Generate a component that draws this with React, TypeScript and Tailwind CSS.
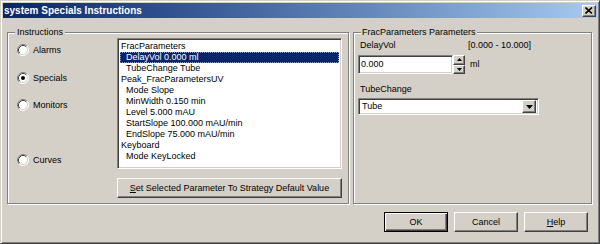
import React from "react";

const listItems = [
  { text: "FracParameters", indent: false },
  { text: "DelayVol 0.000 ml", indent: true, selected: true },
  { text: "TubeChange Tube", indent: true },
  { text: "Peak_FracParametersUV", indent: false },
  { text: "Mode Slope", indent: true },
  { text: "MinWidth 0.150 min", indent: true },
  { text: "Level 5.000 mAU", indent: true },
  { text: "StartSlope 100.000 mAU/min", indent: true },
  { text: "EndSlope 75.000 mAU/min", indent: true },
  { text: "Keyboard", indent: false },
  { text: "Mode KeyLocked", indent: true },
];

const raised =
  "bg-[#d4d0c8] border border-t-white border-l-white border-r-[#404040] border-b-[#404040] shadow-[inset_-1px_-1px_0_#808080]";
const sunken =
  "bg-white border border-t-[#808080] border-l-[#808080] border-r-white border-b-white shadow-[inset_1px_1px_0_#404040,inset_-1px_-1px_0_#d4d0c8]";
const etched =
  "border border-[#808080] shadow-[1px_1px_0_#fff,inset_1px_1px_0_#fff]";

function Radio({ checked }: { checked?: boolean }) {
  return (
    <svg width="12" height="12" viewBox="0 0 12 12" className="shrink-0">
      <circle cx="6" cy="6" r="5" fill="#fff" />
      <path d="M2.11 9.89 A5.5 5.5 0 0 1 9.89 2.11" fill="none" stroke="#808080" strokeWidth="1" />
      <path d="M9.89 2.11 A5.5 5.5 0 0 1 2.11 9.89" fill="none" stroke="#fff" strokeWidth="1" />
      <path d="M2.82 9.18 A4.5 4.5 0 0 1 9.18 2.82" fill="none" stroke="#404040" strokeWidth="1" />
      <path d="M9.18 2.82 A4.5 4.5 0 0 1 2.82 9.18" fill="none" stroke="#d4d0c8" strokeWidth="1" />
      {checked && <circle cx="6" cy="6" r="2" fill="#000" />}
    </svg>
  );
}

function Arrow({ dir }: { dir: "up" | "down" }) {
  return (
    <svg width="5" height="3" viewBox="0 0 5 3">
      <path d={dir === "up" ? "M2.5 0 L5 3 L0 3 Z" : "M0 0 L5 0 L2.5 3 Z"} fill="#000" />
    </svg>
  );
}

export default function App() {
  return (
    <div className="w-[600px] h-[244px] overflow-hidden bg-[#d4d0c8] border border-t-[#d4d0c8] border-l-[#d4d0c8] border-r-[#404040] border-b-[#404040] shadow-[inset_1px_1px_0_#fff,inset_-1px_-1px_0_#808080] p-[2px] flex flex-col [font-family:'Liberation_Sans',Arial,sans-serif] text-[9px] leading-[11px] text-black">
      {/* Title bar */}
      <div className="h-[15px] shrink-0 flex items-center bg-gradient-to-r from-[#0a246a] to-[#a6caf0] pl-[1px] pr-[1px]">
        <span className="text-white font-bold text-[10px] leading-[15px]">system Specials Instructions</span>
        <div className={`ml-auto w-[14px] h-[12px] flex items-center justify-center ${raised}`}>
          <svg width="8" height="7" viewBox="0 0 8 7">
            <path d="M0.5 0.5 L7 6.5 M7 0.5 L0.5 6.5" stroke="#000" strokeWidth="1.6" />
          </svg>
        </div>
      </div>

      {/* Body */}
      <div className="flex-1 flex flex-col pl-[4px] pr-[5px]">
        <div className="flex gap-[4px] mt-[9px]">
          {/* Instructions group */}
          <fieldset className={`w-[342px] h-[177px] ${etched}`}>
            <legend className="ml-[7px] px-[2px] bg-[#d4d0c8] leading-[11px]">Instructions</legend>
            <div className="flex pl-[9px]">
              <div className="w-[100px] flex flex-col">
                <div className="flex items-center gap-[4px] h-[12px] mt-[6px]">
                  <Radio />
                  <span>Alarms</span>
                </div>
                <div className="flex items-center gap-[4px] h-[12px] mt-[16px]">
                  <Radio checked />
                  <span>Specials</span>
                </div>
                <div className="flex items-center gap-[4px] h-[12px] mt-[15px]">
                  <Radio />
                  <span>Monitors</span>
                </div>
                <div className="flex items-center gap-[4px] h-[12px] mt-[43px]">
                  <Radio />
                  <span>Curves</span>
                </div>
              </div>
              <div className="w-[225px] flex flex-col">
                <div className={`h-[131px] p-[2px] ${sunken}`}>
                  {listItems.map((item) => (
                    <div
                      key={item.text}
                      className={`h-[11px] leading-[11px] whitespace-nowrap ${item.indent ? "pl-[6px]" : "pl-[1px]"} ${
                        item.selected
                          ? "bg-[#0a246a] text-white outline outline-1 outline-dotted outline-[#8c9cc4] -outline-offset-1"
                          : ""
                      }`}
                    >
                      {item.text}
                    </div>
                  ))}
                </div>
                <div className={`mt-[9px] h-[20px] flex items-center justify-center ${raised}`}>
                  <span>
                    <span className="underline">S</span>et Selected Parameter To Strategy Default Value
                  </span>
                </div>
              </div>
            </div>
          </fieldset>

          {/* Parameters group */}
          <fieldset className={`w-[239px] h-[177px] ${etched}`}>
            <legend className="ml-[7px] px-[1px] bg-[#d4d0c8] leading-[11px]">FracParameters Parameters</legend>
            <div className="flex flex-col pl-[4px]">
              <div className="flex mt-[2px] h-[11px]">
                <span className="w-[110px] pl-[2px]">DelayVol</span>
                <span>[0.000 - 10.000]</span>
              </div>
              <div className="flex items-center mt-[4px]">
                <div className={`w-[95px] h-[19px] flex items-center pl-[2px] ${sunken}`}>0.000</div>
                <div className="w-[12px] h-[19px] flex flex-col">
                  <div className={`flex-1 flex items-center justify-center ${raised}`}>
                    <Arrow dir="up" />
                  </div>
                  <div className={`flex-1 flex items-center justify-center ${raised}`}>
                    <Arrow dir="down" />
                  </div>
                </div>
                <span className="ml-[5px]">ml</span>
              </div>
              <div className="mt-[10px] h-[11px] pl-[2px]">TubeChange</div>
              <div className={`mt-[3px] w-[181px] h-[17px] flex items-center p-[2px] ${sunken}`}>
                <span className="pl-[1px]">Tube</span>
                <div className={`ml-auto w-[14px] h-[13px] flex items-center justify-center ${raised}`}>
                  <svg width="7" height="4" viewBox="0 0 7 4">
                    <path d="M0 0 L7 0 L3.5 4 Z" fill="#000" />
                  </svg>
                </div>
              </div>
            </div>
          </fieldset>
        </div>

        {/* Buttons */}
        <div className="flex justify-end gap-[6px] mt-[8px] pr-[4px]">
          <div className="w-[64px] h-[20px] flex items-center justify-center bg-[#d4d0c8] border border-black shadow-[inset_1px_1px_0_#fff,inset_-1px_-1px_0_#404040,inset_-2px_-2px_0_#808080]">
            OK
          </div>
          <div className={`w-[64px] h-[20px] flex items-center justify-center ${raised}`}>Cancel</div>
          <div className={`w-[64px] h-[20px] flex items-center justify-center ${raised}`}>
            <span>
              <span className="underline">H</span>elp
            </span>
          </div>
        </div>
      </div>
    </div>
  );
}
